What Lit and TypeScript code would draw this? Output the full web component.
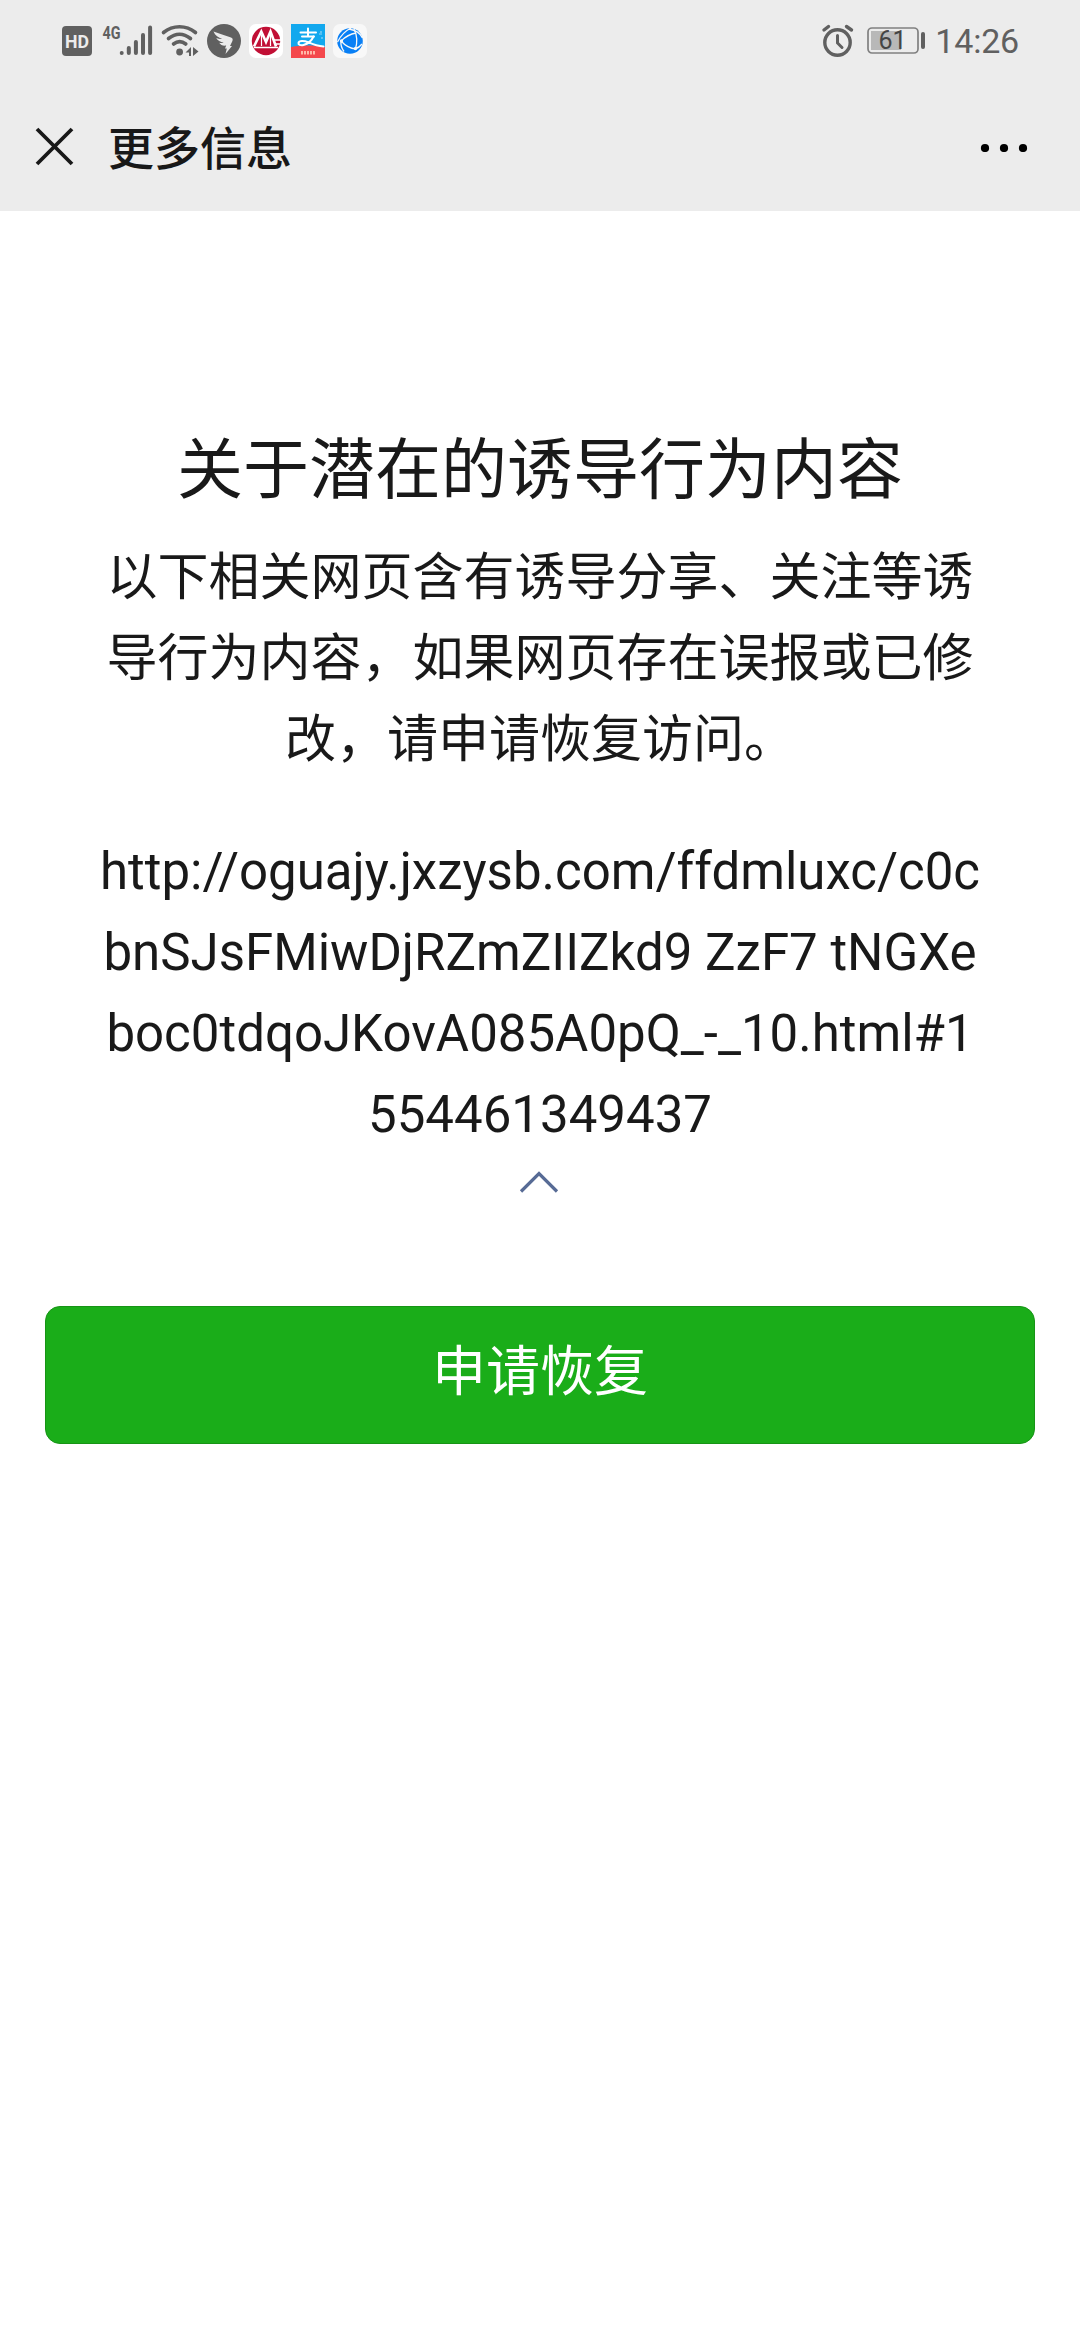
import { LitElement, html, css } from "lit";
import { customElement, property } from "lit/decorators.js";

@customElement("status-bar")
class StatusBar extends LitElement {
  @property() time = "14:26";
  @property({ type: Number }) battery = 61;

  static styles = css`
    :host {
      display: flex;
      justify-content: space-between;
      align-items: center;
      height: 82px;
      box-sizing: border-box;
      padding: 0 61px 0 62px;
      color: #606060;
      font-family: Roboto, "Liberation Sans", sans-serif;
    }
    .group {
      display: flex;
      align-items: center;
    }
    svg {
      display: block;
      flex: none;
      overflow: visible;
    }
    .signal { margin-left: 10px; }
    .wifi { margin-left: 8px; }
    .app { margin-left: 8px; }
    .battery { margin-left: 13px; }
    .time {
      margin-left: 9px;
      font-size: 34px;
      line-height: 40px;
      letter-spacing: -0.2px;
    }
    text { font-family: Roboto, "Liberation Sans", sans-serif; }
  `;

  render() {
    return html`
      <div class="group">
        <svg width="30" height="34" viewBox="0 0 30 34">
          <rect y="2" width="30" height="30" rx="4" fill="#606060" />
          <text x="3" y="23.500" font-size="19" font-weight="700" textLength="24" lengthAdjust="spacingAndGlyphs" fill="#ececec">HD</text>
        </svg>
        <svg class="signal" width="51" height="50" viewBox="0 -8 51 50">
          <text x="0.500" y="14.500" font-size="19" font-weight="700" textLength="18" lengthAdjust="spacingAndGlyphs" fill="#606060">4G</text>
          <path d="M19.700 29v.1M26.800 24v5M33.900 18v11M41 11v18M48.100 3.500v25.500" stroke="#606060" stroke-width="4" stroke-linecap="round" />
        </svg>
        <svg class="wifi" width="38" height="34" viewBox="0 0 38 34">
          <g fill="none" stroke="#606060" stroke-width="3.600" stroke-linecap="round">
            <path d="M2.500 8.500C12 .8 25 .8 34.500 8.500" />
            <path d="M7.500 14.500C14.500 8.800 22.500 8.800 29.500 14.500" />
            <path d="M12.500 20C16.500 16.800 20.800 16.800 24.800 20" />
          </g>
          <circle cx="18.600" cy="28" r="3.400" fill="#606060" />
          <path d="M30 23v9h-2v-3.500h-3.500zM32 23l5.500 4.500L32 32z" fill="#606060" />
        </svg>
        <svg class="app" width="34" height="34" viewBox="0 0 34 34">
          <circle cx="17" cy="17" r="17" fill="#606060" />
          <path d="M6.500 7.500C12 9.500 18 11.500 24 13.500c2 .8 2 2.200 1.200 4L23 22h2l-6.500 8 1.300-5.500H18l1.200-3c-3 .6-5.500-.5-7-2.800 1.500.3 3 .3 4.500 0-3.500-.6-6-2.200-7.500-4.600 2 .7 4 1 6 .8C11.500 13.500 8 11.500 6.500 7.500z" fill="#ececec" />
        </svg>
        <svg class="app" width="34" height="34" viewBox="0 0 34 34">
          <rect width="34" height="34" rx="7" fill="#fff" />
          <circle cx="17" cy="17" r="14.200" fill="#c10f35" />
          <path d="M5 22.500L12.300 7.500 17 18l4.500-10.500L27 22.500" fill="none" stroke="#fff" stroke-width="2.600" />
          <path d="M5 23.500h24M25 16h8M26.500 20h6" stroke="#fff" stroke-width="1.600" />
          <path d="M12.500 11v11M21.500 11v11" stroke="#fff" stroke-width="1.200" />
        </svg>
        <svg class="app" width="34" height="34" viewBox="0 0 34 34">
          <rect width="34" height="34" fill="#12a8ee" />
          <path d="M0 23c11-2 23-2 34 0v11H0z" fill="#f4484c" />
          <g fill="none" stroke="#fff" stroke-width="2" stroke-linecap="round">
            <path d="M9.500 8.500h15.500M17 4.500v8M11 12.500h12" />
            <path d="M22.500 12.500c-2 4.500-5.500 7.300-10 8.500-3 .8-5.500-.3-5-2.300.6-2.300 5.500-2.300 9.500-.5 4.500 2 9 4 15.500 4.300" />
          </g>
          <path d="M10 28.700h14" stroke="#ffb8a8" stroke-width="3.600" stroke-dasharray="2 1" />
          <path d="M28 10h3M30 7v2M31 13v2" stroke="#8fd6f8" stroke-width="1.200" />
        </svg>
        <svg class="app" width="34" height="34" viewBox="0 0 34 34">
          <rect width="34" height="34" rx="7" fill="#f8f8f8" />
          <circle cx="17" cy="17" r="12.800" fill="#087ff5" />
          <g fill="none" stroke="#f8f8f8" stroke-width="1.300">
            <path d="M18 4C12 7 7.500 12 4.500 18M16 5c6 1 11 3.500 13.500 9" />
            <path d="M8 17c4 4.500 9 7.500 15 8M8 17c4-4 9-7 15-8M21 5c3 6 3.500 13 1.500 20M23 24.500c2-.5 4-2 6-4.500M8 17c-.5 4 .5 7 3 10.500" />
          </g>
          <circle cx="8.500" cy="17" r="1.700" fill="#f8f8f8" />
          <circle cx="22.500" cy="24.500" r="1.700" fill="#f8f8f8" />
        </svg>
      </div>
      <div class="group">
        <svg width="32" height="34" viewBox="0 0 32 34">
          <g fill="none" stroke="#606060" stroke-linecap="round">
            <circle cx="15.500" cy="18.500" r="12.700" stroke-width="3.400" />
            <path d="M2 6L6.500 2.500M24.500 2.500L29.500 6" stroke-width="3.400" />
            <path d="M15.500 11.500V19l4.500 4.500" stroke-width="3" />
          </g>
        </svg>
        <svg class="battery" width="59" height="34" viewBox="0 0 59 34">
          <rect x="1" y="4" width="50" height="25" rx="4" fill="none" stroke="#808080" stroke-width="1.700" />
          <rect x="4" y="7" width="30" height="19" fill="#b8b8b8" />
          <rect x="54" y="8" width="4" height="17" rx="2" fill="#606060" />
          <text x="25.500" y="25.300" font-size="25" text-anchor="middle" fill="#454545">${this.battery}</text>
        </svg>
        <span class="time">${this.time}</span>
      </div>
    `;
  }
}

@customElement("nav-bar")
class NavBar extends LitElement {
  @property() heading = "";

  static styles = css`
    :host {
      display: flex;
      align-items: center;
      height: 129px;
      box-sizing: border-box;
      padding: 0 52px 0 35px;
      color: #181818;
    }
    svg { display: block; flex: none; }
    .heading {
      flex: 1;
      margin-left: 34px;
      padding-bottom: 4px;
      font: 500 46px/60px "Noto Sans CJK SC", sans-serif;
    }
  `;

  render() {
    return html`
      <svg width="39" height="39" viewBox="0 0 39 39">
        <path d="M2 2l35 35M37 2L2 37" stroke="#181818" stroke-width="3.800" />
      </svg>
      <span class="heading">${this.heading}</span>
      <svg width="48" height="10" viewBox="0 0 48 10">
        <circle cx="5" cy="6" r="4.100" />
        <circle cx="24" cy="6" r="4.100" />
        <circle cx="43" cy="6" r="4.100" />
      </svg>
    `;
  }
}

@customElement("app-root")
class AppRoot extends LitElement {
  static styles = css`
    :host {
      display: flex;
      flex-direction: column;
      min-height: 2340px;
      background: #fff;
      color: #191919;
      font-family: Roboto, "Noto Sans CJK SC", sans-serif;
    }
    header { background: #ececec; }
    main {
      display: flex;
      flex-direction: column;
      align-items: stretch;
      padding: 210px 45px 0;
      text-align: center;
    }
    h1 {
      margin: 0;
      font-size: 66px;
      font-weight: 400;
      line-height: 100px;
    }
    p {
      margin: 0;
      font-size: 51px;
      line-height: 81px;
      white-space: nowrap;
    }
    .description { margin-top: 16px; }
    .url { margin-top: 51px; }
    .chevron {
      display: block;
      align-self: center;
      margin: 15px 3px 0 0;
    }
    button {
      margin: 112px 0 0;
      height: 138px;
      padding: 0 0 14px;
      border: 1px solid #179416;
      border-radius: 15px;
      background: #1aad19;
      color: #fff;
      font: 400 54px/80px "Noto Sans CJK SC", sans-serif;
    }
  `;

  render() {
    return html`
      <header>
        <status-bar></status-bar>
        <nav-bar heading="更多信息"></nav-bar>
      </header>
      <main>
        <h1>关于潜在的诱导行为内容</h1>
        <p class="description">
          以下相关网页含有诱导分享、关注等诱<br />导行为内容，如果网页存在误报或已修<br />改，请申请恢复访问。
        </p>
        <p class="url">
          http://oguajy.jxzysb.com/ffdmluxc/c0c<br />bnSJsFMiwDjRZmZIIZkd9 ZzF7 tNGXe<br />boc0tdqoJKovA085A0pQ_-_10.html#1<br />554461349437
        </p>
        <svg class="chevron" width="40" height="24" viewBox="0 0 40 24">
          <path d="M2 21.500L20 3.500l18 18" fill="none" stroke="#576b95" stroke-width="3.200" />
        </svg>
        <button>申请恢复</button>
      </main>
    `;
  }
}
